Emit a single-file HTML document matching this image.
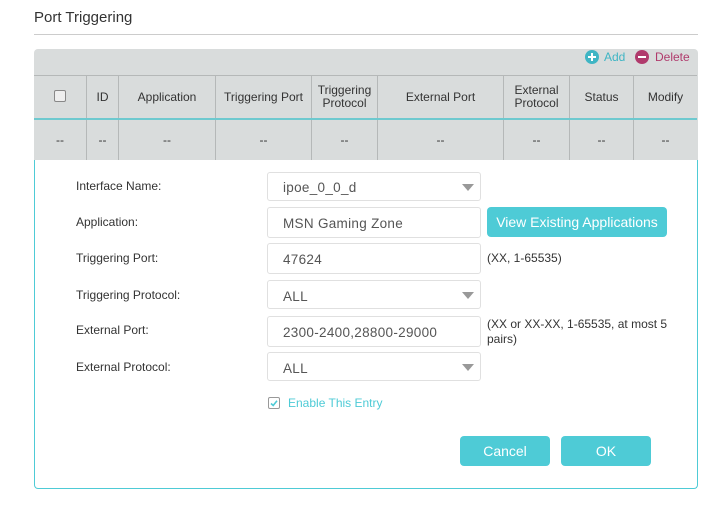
<!DOCTYPE html>
<html><head><style>
body{margin:0;width:703px;height:508px;background:#fff;font-family:"Liberation Sans",sans-serif;position:relative;overflow:hidden;color:#333}
.a{position:absolute}
.title{left:34px;top:9px;font-size:15px;color:#333}
.hr{left:34px;top:34px;width:664px;height:1px;background:#ccc}
.gray{left:34px;top:49px;width:664px;height:112px;background:#d9dcdc;border-radius:4px 4px 0 0}
table{position:absolute;left:34px;top:75px;border-collapse:collapse;font-size:12px;color:#333}
td{border:1px solid #b5b8b8;text-align:center;padding:0;line-height:13px}
tr.h td{height:42px;border-top:1px solid #b5b8b8}
tr.d td{height:40px;border-top:2px solid #6ec9cf}
.panel{left:34px;top:160px;width:662px;height:328px;border:1px solid #4ecbd6;border-top:none;border-radius:0 0 4px 4px;background:#fff}
.lbl{left:76px;font-size:12px;color:#333}
.in{left:267px;width:214px;height:29px;border:1px solid #e0e0e0;border-radius:3px;font-size:13.5px;color:#555;line-height:29px;box-sizing:border-box;padding-left:15px;letter-spacing:.3px}
.arr{position:absolute;right:6px;top:11px;width:0;height:0;border-left:6px solid transparent;border-right:6px solid transparent;border-top:7px solid #999}
.btn{background:#4ecbd6;color:#fff;border-radius:4px;text-align:center}
.hint{left:487px;font-size:12px;color:#333}
</style></head><body>
<div class="a title">Port Triggering</div>
<div class="a hr"></div>
<div class="a gray"></div>
<div class="a" style="left:585px;top:50px;width:14px;height:14px;border-radius:50%;background:#3fb5c4"></div>
<div class="a" style="left:588px;top:56px;width:8px;height:2px;background:#fff"></div>
<div class="a" style="left:591px;top:53px;width:2px;height:8px;background:#fff"></div>
<div class="a" style="left:604px;top:50px;font-size:12px;color:#3fb5c4">Add</div>
<div class="a" style="left:635px;top:50px;width:14px;height:14px;border-radius:50%;background:#b03a6c"></div>
<div class="a" style="left:638px;top:56px;width:8px;height:2px;background:#fff"></div>
<div class="a" style="left:655px;top:50px;font-size:12px;color:#b03a6c">Delete</div>
<table>
<tr class="h"><td style="width:52px;border-left:none"><span style="display:inline-block;width:10px;height:10px;border:1px solid #888;border-radius:2px;background:#eee"></span></td><td style="width:31px">ID</td><td style="width:96px">Application</td><td style="width:95px">Triggering Port</td><td style="width:65px">Triggering<br>Protocol</td><td style="width:125px">External Port</td><td style="width:65px">External<br>Protocol</td><td style="width:63px">Status</td><td style="width:63px;border-right:none">Modify</td></tr>
<tr class="d"><td style="border-left:none">--</td><td>--</td><td>--</td><td>--</td><td>--</td><td>--</td><td>--</td><td>--</td><td style="border-right:none">--</td></tr>
</table>
<div class="a panel"></div>
<div class="a lbl" style="top:179px">Interface Name:</div>
<div class="a lbl" style="top:215px">Application:</div>
<div class="a lbl" style="top:251px">Triggering Port:</div>
<div class="a lbl" style="top:288px">Triggering Protocol:</div>
<div class="a lbl" style="top:323px">External Port:</div>
<div class="a lbl" style="top:360px">External Protocol:</div>
<div class="a in" style="top:172px">ipoe_0_0_d<span class="arr"></span></div>
<div class="a in" style="top:207px;height:31px;line-height:31px">MSN Gaming Zone</div>
<div class="a in" style="top:243px;height:31px;line-height:31px">47624</div>
<div class="a in" style="top:280px;line-height:32px">ALL<span class="arr"></span></div>
<div class="a in" style="top:316px;height:31px;line-height:31px">2300-2400,28800-29000</div>
<div class="a in" style="top:352px;line-height:32px">ALL<span class="arr"></span></div>
<div class="a btn" style="left:487px;top:207px;width:180px;height:30px;line-height:30px;font-size:14px">View Existing Applications</div>
<div class="a hint" style="top:251px">(XX, 1-65535)</div>
<div class="a hint" style="top:317px;line-height:15px">(XX or XX-XX, 1-65535, at most 5<br>pairs)</div>
<div class="a" style="left:268px;top:397px;width:10px;height:10px;border:1px solid #999;border-radius:2px"></div>
<svg class="a" style="left:269px;top:398px" width="10" height="10"><path d="M2 5.5 L4.2 7.5 L8 2.8" stroke="#4ecbd6" stroke-width="1.6" fill="none"/></svg>
<div class="a" style="left:288px;top:396px;font-size:12px;color:#4ecbd6">Enable This Entry</div>
<div class="a btn" style="left:460px;top:436px;width:90px;height:30px;line-height:30px;font-size:14px">Cancel</div>
<div class="a btn" style="left:561px;top:436px;width:90px;height:30px;line-height:30px;font-size:14px">OK</div>
</body></html>
